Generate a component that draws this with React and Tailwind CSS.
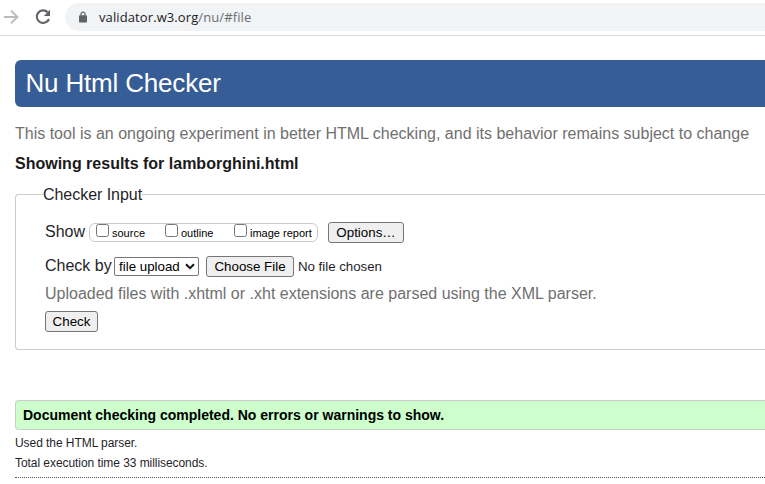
import React from "react";

function BrowserBar() {
  return (
    <div className="flex h-9 border-b border-[#dadce0] bg-white">
      <svg className="mt-2 ml-[3px] h-[18px] w-[17px] shrink-0" viewBox="0 0 17 18" fill="none" stroke="#babcbe" strokeWidth="2">
        <path d="M1 9H14M8 2.6L14.4 9L8 15.4" />
      </svg>
      <svg className="mt-2 ml-[14px] h-[18px] w-[18px] shrink-0" viewBox="0 0 18 18" fill="none">
        <path d="M13.7 4.3A6.3 6.3 0 1 0 15 11" stroke="#5f6368" strokeWidth="2.1" />
        <path d="M16 1.8V8H9.8Z" fill="#5f6368" />
      </svg>
      <div className="mt-[3px] ml-[13px] flex h-7 flex-1 items-center rounded-l-full bg-[#f1f3f4] pl-[14px]">
        <svg className="h-3 w-2 shrink-0" viewBox="0 0 8 12">
          <path d="M2 5V3.2a2 2 0 0 1 4 0V5" fill="none" stroke="#5f6368" strokeWidth="1.2" />
          <rect x="0" y="4.3" width="8" height="7.2" rx="0.9" fill="#5f6368" />
        </svg>
        <span className="ml-3 font-['Open_Sans','Noto_Sans',sans-serif] text-[13px] leading-5 tracking-[0.1px] whitespace-nowrap text-[#202124]">
          validator.w3.org<span className="text-[#6b6f73]">/nu/#file</span>
        </span>
      </div>
    </div>
  );
}

function CheckOption({ label, className }) {
  return (
    <label className={"flex items-start " + className}>
      <span className="h-[13px] w-[13px] shrink-0 rounded-[2.5px] border border-[#767676] bg-white" />
      <span className="mt-[3px] ml-[3px] text-[11px] leading-[13px] whitespace-nowrap text-black">{label}</span>
    </label>
  );
}

function Button({ children, className }) {
  return (
    <button className={"h-[21px] shrink-0 rounded-[3px] border border-[#767676] bg-[#efefef] text-center text-[13.333px] leading-[19px] whitespace-nowrap text-black " + className}>
      {children}
    </button>
  );
}

export default function App() {
  return (
    <div className="h-[484px] w-[765px] overflow-hidden bg-white font-['Liberation_Sans',Arial,sans-serif] text-base leading-5 text-[#1f1f2b]">
      <BrowserBar />
      <main className="pt-6 pl-[15px]">
        <h1 className="h-[47px] rounded-l-[6px] bg-[#365d95] pl-[10.5px] text-[26px] leading-[46px] tracking-[-0.18px] text-white">Nu Html Checker</h1>
        <p className="mt-[17px] whitespace-nowrap text-[#707070]">
          This tool is an ongoing experiment in better HTML checking, and its behavior remains subject to change
        </p>
        <h2 className="mt-[10px] font-bold text-[#1a1a1a]">Showing results for lamborghini.html</h2>

        <fieldset className="mt-[11px] h-[165px] rounded-l-[4px] border border-r-0 border-[#ccc] pl-[29px]">
          <legend className="-ml-[2px] h-[19px] tracking-[-0.04px]">Checker Input</legend>
          <div className="mt-[17px] flex h-[23px] items-start pt-px">
            <span className="w-11">Show</span>
            <div className="mt-px flex h-[19px] w-[229px] rounded-[6px] border border-[#ccc] pl-[6px]">
              <CheckOption label="source" className="w-[69px]" />
              <CheckOption label="outline" className="w-[69px]" />
              <CheckOption label="image report" className="" />
            </div>
            <Button className="ml-[10px] w-[76px]">Options…</Button>
          </div>
          <div className="mt-[12px] flex h-[21px] items-start">
            <span className="w-[69px] whitespace-nowrap">Check by</span>
            <div className="mt-px flex h-[19px] w-[85px] items-center rounded-[2px] border border-[#767676] pl-[4px] text-[13.333px] leading-[17px] whitespace-nowrap text-black">
              file upload
              <svg className="ml-[5px] h-[7px] w-[10px]" viewBox="0 0 10 7" fill="none" stroke="#111" strokeWidth="2">
                <path d="M1 1.2L5 5.2L9 1.2" />
              </svg>
            </div>
            <Button className="ml-[7px] w-[88px]">Choose File</Button>
            <span className="ml-1 text-[13.333px] leading-[21px] tracking-[-0.04px] whitespace-nowrap">No file chosen</span>
          </div>
          <p className="mt-[7px] text-[#707070]">Uploaded files with .xhtml or .xht extensions are parsed using the XML parser.</p>
          <Button className="mt-[7px] block w-[53px]">Check</Button>
        </fieldset>

        <p className="mt-[50px] h-[30px] rounded-l-[4px] border border-r-0 border-[#ccc] bg-[#ccffcc] pl-[7px] text-sm leading-7 font-bold text-black">
          Document checking completed. No errors or warnings to show.
        </p>
        <p className="mt-[3px] text-xs leading-5 tracking-[-0.06px]">Used the HTML parser.</p>
        <p className="text-xs leading-5 tracking-[-0.06px]">Total execution time 33 milliseconds.</p>
        <hr className="mt-1 border-t border-dotted border-[#555]" />
      </main>
    </div>
  );
}
